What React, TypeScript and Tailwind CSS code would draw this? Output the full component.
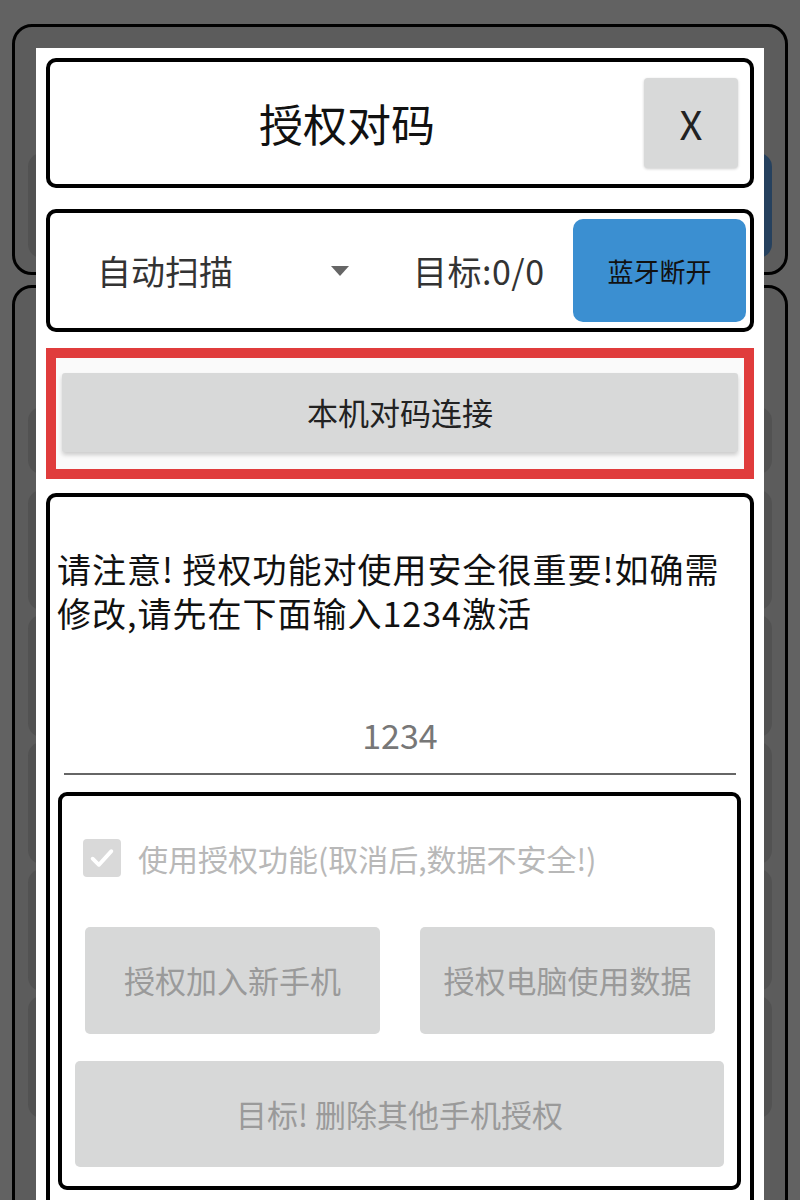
import React from 'react';

const font = "font-['Noto_Sans_CJK_SC','Noto_Sans',sans-serif]";

const BackgroundPage: React.FC = () => (
  <div className="flex flex-col">
    <div className="mx-[12px] mt-[24px] h-[251px] rounded-[20px] border-[3px] border-black bg-[#5c5c5c] px-[13px] pt-[126px]">
      <div className="flex h-[105px] gap-[20px]">
        <div className="flex-1 rounded-[14px] bg-[#525252]" />
        <div className="w-[220px] rounded-[14px] bg-[#26415e]" />
      </div>
    </div>
    <div className="mx-[12px] mt-[10px] h-[960px] rounded-t-[20px] border-[3px] border-black bg-[#5c5c5c] px-[13px] pt-[119px]">
      <div className="flex flex-col gap-[5px]">
        <div className="mb-[11px] h-[67px] rounded-[14px] bg-[#525252]" />
        <div className="h-[120px] rounded-[14px] bg-[#525252]" />
        <div className="h-[122px] rounded-[14px] bg-[#525252]" />
        <div className="h-[122px] rounded-[14px] bg-[#525252]" />
        <div className="h-[122px] rounded-[14px] bg-[#525252]" />
        <div className="h-[122px] rounded-[14px] bg-[#525252]" />
      </div>
    </div>
  </div>
);

const GrayButton: React.FC<{ label: string; className?: string }> = ({ label, className = '' }) => (
  <div
    className={`flex items-center justify-center rounded-[5px] bg-[#d7d8d8] text-[31px] text-[#9a9a9a] ${className}`}
  >
    {label}
  </div>
);

export default function App() {
  return (
    <div className={`relative h-[1200px] w-[800px] overflow-hidden bg-[#626262] ${font}`}>
      <BackgroundPage />

      {/* dialog */}
      <div className="absolute left-[36px] top-[48px] h-[1152px] w-[728px] bg-white px-[10px] pt-[10px]">
        {/* title */}
        <div className="flex h-[130px] items-center rounded-[10px] border-4 border-black">
          <div className="flex-1 text-center text-[44px] leading-none text-[#111]">授权对码</div>
          <button className="mr-[12px] flex h-[90px] w-[94px] items-center justify-center rounded-[4px] bg-[#d8d9d9] text-[40px] text-[#222] shadow-[0_1px_3px_rgba(0,0,0,0.2)]">
            X
          </button>
        </div>

        {/* scan row */}
        <div className="mt-[21px] flex h-[123px] items-center rounded-[10px] border-4 border-black">
          <div className="flex w-[299px] items-center justify-between pl-[47px]">
            <span className="text-[34px] text-[#333]">自动扫描</span>
            <svg width="18" height="10" viewBox="0 0 18 10">
              <polygon points="0,0 18,0 9,10" fill="#666" />
            </svg>
          </div>
          <span className="ml-[64px] text-[34px] tracking-[0.5px] text-[#333]">目标:0/0</span>
          <button className="ml-auto mr-[4px] flex h-[103px] w-[173px] items-center justify-center rounded-[10px] bg-[#3b8fd1] text-[26px] text-[#111]">
            蓝牙断开
          </button>
        </div>

        {/* local pairing */}
        <div className="mt-[16px] h-[131px] border-[10px] border-[#e03c3c] bg-[#fafafa] px-[6px] pt-[15px]">
          <button className="flex h-[79px] w-full items-center justify-center rounded-[3px] bg-[#d8d9d9] text-[31px] text-[#222] shadow-[0_3px_4px_rgba(0,0,0,0.18)]">
            本机对码连接
          </button>
        </div>

        {/* authorization */}
        <div className="mt-[14px] rounded-t-[10px] border-x-4 border-t-4 border-black px-[6px] pb-[40px] pt-[50px]">
          <p className="pl-[1px] text-[34px] leading-[44px] tracking-[1px] text-[#111]">
            请注意! 授权功能对使用安全很重要!如确需
            <br />
            修改,请先在下面输入1234激活
          </p>

          <div className="mx-[8px] mt-[78px] flex h-[62px] items-center justify-center border-b-2 border-[#666] pb-[18px] text-[34px] text-[#777]">
            1234
          </div>

          <div className="ml-[2px] mr-[3px] mt-[17px] flex flex-col rounded-[9px] border-4 border-black px-[13px] pb-[19px] pt-[43px]">
            <label className="flex h-[38px] items-center gap-[17px] pl-[8px]">
              <span className="flex h-[38px] w-[38px] items-center justify-center rounded-[4px] bg-[#d9d9d9]">
                <svg width="30" height="30" viewBox="0 0 24 24" fill="none">
                  <polyline points="4.5,12.5 9.5,17.5 19.5,6.5" stroke="white" strokeWidth="3" strokeLinecap="round" strokeLinejoin="round" />
                </svg>
              </span>
              <span className="text-[30px] leading-[38px] text-[#b8b8b8]">使用授权功能(取消后,数据不安全!)</span>
            </label>

            <div className="mt-[50px] grid grid-cols-2 gap-[40px] pl-[10px] pr-[9px]">
              <GrayButton label="授权加入新手机" className="h-[107px]" />
              <GrayButton label="授权电脑使用数据" className="h-[107px]" />
            </div>

            <GrayButton label="目标! 删除其他手机授权" className="mt-[27px] h-[106px]" />
          </div>
        </div>
      </div>
    </div>
  );
}
